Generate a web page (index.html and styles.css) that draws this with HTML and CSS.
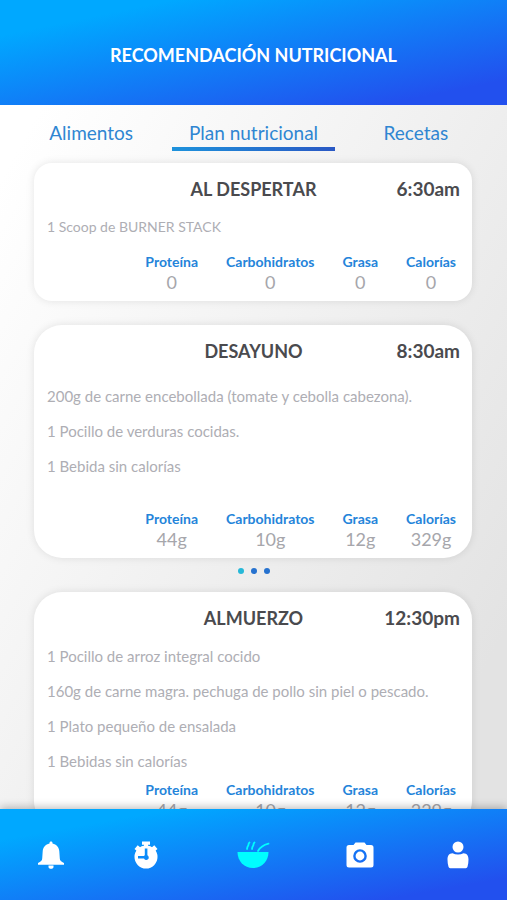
FILE: index.html
```html
<!DOCTYPE html>
<html lang="es">
<head>
  <meta charset="UTF-8">
  <meta name="viewport" content="width=device-width, initial-scale=1">
  <title>Recomendación nutricional</title>
  <link rel="stylesheet" href="styles.css">
</head>
<body>

  <header class="header">
    <h1>RECOMENDACIÓN NUTRICIONAL</h1>
  </header>

  <main class="content">
    <nav class="tabs">
      <a href="#alimentos">Alimentos</a>
      <a href="#plan" class="active">Plan nutricional</a>
      <a href="#recetas">Recetas</a>
    </nav>

    <section class="meal meal-small">
      <div class="meal-head">
        <h2>AL DESPERTAR</h2>
        <time datetime="06:30">6:30am</time>
      </div>
      <ul class="foods">
        <li>1 Scoop de BURNER STACK</li>
      </ul>
      <dl class="macros">
        <div><dt>Proteína</dt><dd>0</dd></div>
        <div><dt>Carbohidratos</dt><dd>0</dd></div>
        <div><dt>Grasa</dt><dd>0</dd></div>
        <div><dt>Calorías</dt><dd>0</dd></div>
      </dl>
    </section>

    <section class="meal meal-slider">
      <div class="meal-head">
        <h2>DESAYUNO</h2>
        <time datetime="08:30">8:30am</time>
      </div>
      <ul class="foods">
        <li>200g de carne encebollada (tomate y cebolla cabezona).</li>
        <li>1 Pocillo de verduras cocidas.</li>
        <li>1 Bebida sin calorías</li>
      </ul>
      <dl class="macros">
        <div><dt>Proteína</dt><dd>44g</dd></div>
        <div><dt>Carbohidratos</dt><dd>10g</dd></div>
        <div><dt>Grasa</dt><dd>12g</dd></div>
        <div><dt>Calorías</dt><dd>329g</dd></div>
      </dl>
    </section>

    <div class="dots">
      <button type="button" class="active" aria-label="Opción 1"></button>
      <button type="button" aria-label="Opción 2"></button>
      <button type="button" aria-label="Opción 3"></button>
    </div>

    <section class="meal meal-full">
      <div class="meal-head">
        <h2>ALMUERZO</h2>
        <time datetime="12:30">12:30pm</time>
      </div>
      <ul class="foods">
        <li>1 Pocillo de arroz integral cocido</li>
        <li>160g de carne magra. pechuga de pollo sin piel o pescado.</li>
        <li>1 Plato pequeño de ensalada</li>
        <li>1 Bebidas sin calorías</li>
      </ul>
      <dl class="macros">
        <div><dt>Proteína</dt><dd>44g</dd></div>
        <div><dt>Carbohidratos</dt><dd>10g</dd></div>
        <div><dt>Grasa</dt><dd>12g</dd></div>
        <div><dt>Calorías</dt><dd>329g</dd></div>
      </dl>
    </section>
  </main>

  <nav class="bottom-nav">
    <button type="button" aria-label="Notificaciones">
      <svg width="28" height="28" viewBox="0 0 28 28" fill="currentColor">
        <path d="M14 0.5c1 0 1.500.7 1.500 1.500v.6c4 .8 6.500 3.700 6.800 7.600l.5 7.300c.1 2 1.400 3.300 4.200 4.500v1.800H1V22c2.800-1.200 4.100-2.500 4.200-4.500l.5-7.300C6 6.300 8.500 3.400 12.500 2.600V2c0-.8.500-1.500 1.500-1.500z"/>
        <path d="M11.500 24.500h5v1.500c0 1-1 1.800-2.500 1.800s-2.500-.8-2.500-1.800z"/>
      </svg>
    </button>
    <button type="button" aria-label="Cronómetro">
      <svg width="28" height="28" viewBox="0 0 28 28" fill="currentColor">
        <path d="M10 .5h8v3.200h-2v2h-4v-2h-2z"/>
        <path d="M2.500 8l3.200-3.700L9 7l-3.400 3.600zM25.500 8l-3.200-3.700L19 7l3.400 3.600z"/>
        <path fill-rule="evenodd" d="M14 4.500a11.500 11.500 0 1 1 0 23 11.500 11.500 0 0 1 0-23zM12.800 7.500v6.800a2.400 2.400 0 0 0-.8.700H6v2.600h6a2.500 2.500 0 1 0 3.400-3.300V7.500z"/>
      </svg>
    </button>
    <button type="button" class="active" aria-label="Nutrición">
      <svg width="34" height="28" viewBox="0 0 34 28" fill="currentColor">
        <path d="M1.500 11h31c0 9-6.500 16-15.500 16S1.500 20 1.500 11z"/>
        <g fill="none" stroke="currentColor" stroke-width="1.800" stroke-linecap="round">
          <path d="M13.500 1.500c-1.800 1.300-.3 2-1.500 3.500-1 1.300-.6 1.600-1 3"/>
          <path d="M18.500 1.500c-1.800 1.300-.3 2-1.500 3.500-1 1.300-.6 1.600-1 3"/>
          <path d="M22 10c2-3.500 5.500-6 10.500-7.300"/>
        </g>
      </svg>
    </button>
    <button type="button" aria-label="Cámara">
      <svg width="28" height="28" viewBox="0 0 28 28" fill="currentColor">
        <path fill-rule="evenodd" d="M9.500 1.500h9l2 2.500H25a2.500 2.500 0 0 1 2.500 2.500V24a2.500 2.500 0 0 1-2.500 2.500H3A2.500 2.500 0 0 1 .5 24V6.500A2.500 2.500 0 0 1 3 4h4.500zM14 8.200a6.800 6.800 0 1 0 0 13.600 6.800 6.800 0 0 0 0-13.600zM14 10.600a4.400 4.400 0 1 1 0 8.800 4.400 4.400 0 0 1 0-8.800z"/>
      </svg>
    </button>
    <button type="button" aria-label="Perfil">
      <svg width="28" height="28" viewBox="0 0 28 28" fill="currentColor">
        <circle cx="14" cy="6" r="5.500"/>
        <path d="M8.500 12.200c3.300 1.600 7.700 1.600 11 0 3.500.3 5 2.500 5 6.300 0 2.500-.3 5-1 7.300-.3.900-.9 1.400-1.700 1.400H6.200c-.8 0-1.400-.5-1.700-1.400-.7-2.300-1-4.800-1-7.300 0-3.800 1.500-6 5-6.300z"/>
      </svg>
    </button>
  </nav>

</body>
</html>
```
FILE: styles.css
```css
/* Basic Reset */
* { margin: 0; padding: 0; box-sizing: border-box; }
body {
  font-family: Lato, 'Open Sans', sans-serif;
  height: 100vh;
  display: flex;
  flex-direction: column;
  background: linear-gradient(to bottom right, #ffffff 10%, #f4f4f4 40%, #e3e3e3 85%);
}
ul { list-style: none; }
button { border: none; background: none; cursor: pointer; }

.header {
  flex: none;
  padding: 43px 16px 38px;
  background: linear-gradient(to bottom right, #00a8ff 17%, #2250ee 88%);
  color: #fff;
  text-align: center;
}
.header h1 {
  font-size: 18px;
  line-height: 24px;
}

.content {
  flex: 1;
  min-height: 0;
  overflow-y: auto;
  scrollbar-width: none;
}

/* Tabs */
.tabs {
  display: grid;
  grid-template-columns: repeat(3, 1fr);
  padding: 16px 10px 12px;
}
.tabs a {
  padding-bottom: 2px;
  border-bottom: 4px solid transparent;
  color: #2f86d2;
  font-size: 19px;
  line-height: 24px;
  text-align: center;
  text-decoration: none;
}
.tabs a.active {
  border-image: linear-gradient(to right, #1e93dc, #2a58c4) 1;
}

/* Meal cards */
.meal {
  margin: 0 35px 24px 34px;
  padding: 14px 12px 8px 13px;
  border-radius: 28px;
  background: #fff;
  box-shadow: 0 0 8px rgba(0, 0, 0, 0.1);
}
.meal-small { border-radius: 18px; }
.meal-head {
  display: grid;
  grid-template-columns: 1fr auto 1fr;
  color: #4a4a4e;
  font-size: 19px;
  font-weight: bold;
  line-height: 24px;
}
.meal-head h2 {
  grid-column: 2;
  font-size: 18px;
}
.meal-head time { text-align: right; }
.foods {
  display: flex;
  flex-direction: column;
  gap: 15px;
  padding: 16px 0;
  color: #aeaeb4;
  font-size: 15px;
  line-height: 20px;
}
.meal-small .foods { font-size: 14px; }
.meal-slider { margin-bottom: 8px; }
.meal-slider .foods { padding: 23px 0 34px; }
.meal-full .foods { padding-bottom: 10px; }

.macros {
  display: flex;
  justify-content: flex-end;
  gap: 28px;
  padding-right: 4px;
  text-align: center;
}
.macros dt {
  color: #2484da;
  font-size: 14px;
  font-weight: bold;
  line-height: 18px;
}
.macros dd {
  color: #a6a6ab;
  font-size: 18px;
  line-height: 22px;
}

.dots {
  display: flex;
  justify-content: center;
  gap: 7px;
  padding: 2px 0 18px;
}
.dots button {
  width: 6px;
  height: 6px;
  border-radius: 50%;
  background: #2672cf;
}
.dots button.active { background: #26b8d8; }

/* Bottom navigation */
.bottom-nav {
  position: relative;
  flex: none;
  display: grid;
  grid-template-columns: 94fr 96fr 118fr 96fr 99fr;
  padding-left: 4px;
  background: linear-gradient(to bottom right, #00a8ff 17%, #2250ee 88%);
  box-shadow: 0 -2px 8px rgba(0, 0, 0, 0.25);
}
.bottom-nav button {
  height: 91px;
  color: #fff;
}
.bottom-nav button.active { color: #00fdff; }
.bottom-nav svg {
  display: block;
  margin: 0 auto;
}
```
